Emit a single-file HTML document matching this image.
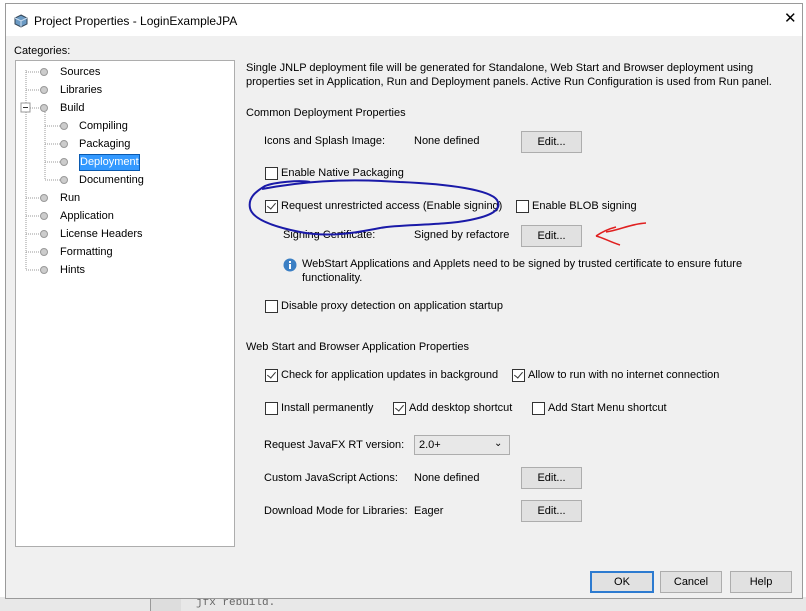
<!DOCTYPE html>
<html><head><style>
body{margin:0;width:806px;height:611px;overflow:hidden;background:#fff;font-family:"Liberation Sans",sans-serif;font-size:11px;line-height:16px;color:#000;position:relative}
.a{position:absolute;white-space:nowrap}
.dlg{position:absolute;left:5px;top:3px;width:796px;height:594px;background:#f0f0f0;border:1px solid #9a9a9a}
.title{position:absolute;left:0;top:0;width:796px;height:32px;background:#fff}
.btn{position:absolute;background:#e1e1e1;border:1px solid #adadad;text-align:center;line-height:20px;height:20px}
.cb{position:absolute;width:11px;height:11px;border:1px solid #333;background:#fff}
.ck::after{content:"";position:absolute;left:3px;top:0px;width:4px;height:7px;border:solid #333;border-width:0 1.5px 1.5px 0;transform:rotate(40deg)}
.tree{position:absolute;left:15px;top:60px;width:218px;height:485px;background:#fff;border:1px solid #adadad}
.dot{position:absolute;width:6px;height:6px;border-radius:50%;background:#ccc;border:1px solid #999}
</style></head><body>
<div class="a" style="left:0;top:597px;width:806px;height:14px;background:#e8e8e8"></div>
<div class="a" style="left:150px;top:597px;width:30px;height:14px;background:#ddd;border-left:1px solid #999"></div>
<div class="a" style="left:196px;top:595px;font-family:'Liberation Mono';font-size:11px;color:#666">jfx rebuild.</div>
<div class="dlg">
<div class="title"></div>
<svg class="a" style="left:8px;top:10px" width="14" height="14"><path d="M7 1L13 4V10L7 13L1 10V4Z" fill="#6b9ac4" stroke="#345" stroke-width="1"/><path d="M1 4L7 7L13 4M7 7V13" stroke="#cde" fill="none"/></svg>
<div class="a" style="left:28px;top:9px;font-size:12px">Project Properties - LoginExampleJPA</div>
<div class="a" style="left:778px;top:7px;font-size:15px">✕</div>
</div>
<div class="a" style="left:14px;top:43px">Categories:</div>
<div class="tree"></div>
<svg class="a" style="left:15px;top:60px" width="220" height="230">
<g stroke="#999" stroke-dasharray="1,1" fill="none">
<path d="M11 10V210M11 12H28M11 30H28M11 48H28M11 138H28M11 156H28M11 174H28M11 192H28M11 210H28"/>
<path d="M30 52V120M30 66H48M30 84H48M30 102H48M30 120H48"/>
</g>
<rect x="6" y="43" width="9" height="9" fill="#fff" stroke="#999"/><path d="M8 47.5H13" stroke="#333"/>
</svg>
<div class="a" style="left:79px;top:154px;width:59px;height:15px;background:#3399ff;border:1px solid #0a5ab0"></div>
<div class="dot" style="left:40px;top:68px"></div><div class="a" style="left:60px;top:64px">Sources</div>
<div class="dot" style="left:40px;top:86px"></div><div class="a" style="left:60px;top:82px">Libraries</div>
<div class="dot" style="left:40px;top:104px"></div><div class="a" style="left:60px;top:100px">Build</div>
<div class="dot" style="left:60px;top:122px"></div><div class="a" style="left:79px;top:118px">Compiling</div>
<div class="dot" style="left:60px;top:140px"></div><div class="a" style="left:79px;top:136px">Packaging</div>
<div class="dot" style="left:60px;top:158px"></div><div class="a" style="left:80px;top:154px;color:#fff">Deployment</div>
<div class="dot" style="left:60px;top:176px"></div><div class="a" style="left:79px;top:172px">Documenting</div>
<div class="dot" style="left:40px;top:194px"></div><div class="a" style="left:60px;top:190px">Run</div>
<div class="dot" style="left:40px;top:212px"></div><div class="a" style="left:60px;top:208px">Application</div>
<div class="dot" style="left:40px;top:230px"></div><div class="a" style="left:60px;top:226px">License Headers</div>
<div class="dot" style="left:40px;top:248px"></div><div class="a" style="left:60px;top:244px">Formatting</div>
<div class="dot" style="left:40px;top:266px"></div><div class="a" style="left:60px;top:262px">Hints</div>

<div class="a" style="left:246px;top:61px;line-height:14px">Single JNLP deployment file will be generated for Standalone, Web Start and Browser deployment using<br>properties set in Application, Run and Deployment panels. Active Run Configuration is used from Run panel.</div>
<div class="a" style="left:246px;top:105px">Common Deployment Properties</div>
<div class="a" style="left:264px;top:133px">Icons and Splash Image:</div>
<div class="a" style="left:414px;top:133px">None defined</div>
<div class="btn" style="left:521px;top:131px;width:59px">Edit...</div>
<div class="cb" style="left:265px;top:167px"></div><div class="a" style="left:281px;top:165px">Enable Native Packaging</div>
<div class="cb ck" style="left:265px;top:200px"></div><div class="a" style="left:281px;top:198px">Request unrestricted access (Enable signing)</div>
<div class="cb" style="left:516px;top:200px"></div><div class="a" style="left:532px;top:198px">Enable BLOB signing</div>
<div class="a" style="left:283px;top:227px">Signing Certificate:</div>
<div class="a" style="left:414px;top:227px">Signed by refactore</div>
<div class="btn" style="left:521px;top:225px;width:59px">Edit...</div>
<svg class="a" style="left:283px;top:258px" width="14" height="14"><circle cx="7" cy="7" r="6.5" fill="#3b7fc4"/><rect x="6" y="6" width="2" height="5" fill="#fff"/><rect x="6" y="3" width="2" height="2" fill="#fff"/></svg>
<div class="a" style="left:302px;top:257px;line-height:14px">WebStart Applications and Applets need to be signed by trusted certificate to ensure future<br>functionality.</div>
<div class="cb" style="left:265px;top:300px"></div><div class="a" style="left:281px;top:298px">Disable proxy detection on application startup</div>
<div class="a" style="left:246px;top:339px">Web Start and Browser Application Properties</div>
<div class="cb ck" style="left:265px;top:369px"></div><div class="a" style="left:281px;top:367px">Check for application updates in background</div>
<div class="cb ck" style="left:512px;top:369px"></div><div class="a" style="left:528px;top:367px">Allow to run with no internet connection</div>
<div class="cb" style="left:265px;top:402px"></div><div class="a" style="left:281px;top:400px">Install permanently</div>
<div class="cb ck" style="left:393px;top:402px"></div><div class="a" style="left:409px;top:400px">Add desktop shortcut</div>
<div class="cb" style="left:532px;top:402px"></div><div class="a" style="left:548px;top:400px">Add Start Menu shortcut</div>
<div class="a" style="left:264px;top:437px">Request JavaFX RT version:</div>
<div class="a" style="left:414px;top:435px;width:94px;height:18px;background:#e8e8e8;border:1px solid #adadad"></div>
<div class="a" style="left:419px;top:437px">2.0+</div>
<div class="a" style="left:494px;top:436px;font-size:10px">⌄</div>
<div class="a" style="left:264px;top:470px">Custom JavaScript Actions:</div>
<div class="a" style="left:414px;top:470px">None defined</div>
<div class="btn" style="left:521px;top:467px;width:59px">Edit...</div>
<div class="a" style="left:264px;top:503px">Download Mode for Libraries:</div>
<div class="a" style="left:414px;top:503px">Eager</div>
<div class="btn" style="left:521px;top:500px;width:59px">Edit...</div>
<div class="btn" style="left:590px;top:571px;width:60px;border:2px solid #2d7bd0;height:18px;line-height:18px">OK</div>
<div class="btn" style="left:660px;top:571px;width:60px">Cancel</div>
<div class="btn" style="left:730px;top:571px;width:60px">Help</div>
<svg class="a" style="left:0;top:0" width="806" height="611">
<path d="M262 189C300 182 340 178 400 182C450 184 490 190 497 200C503 210 490 216 470 220C440 226 400 224 380 228C360 232 330 238 300 232C270 226 252 218 250 208C248 198 255 192 265 186C275 182 300 180 310 182" fill="none" stroke="#1a1aa8" stroke-width="2"/>
<path d="M646 223C630 224 620 230 606 232M596 236C602 232 608 229 616 227M596 236C604 238 610 242 620 245" fill="none" stroke="#e02020" stroke-width="1.5"/>
</svg>
</body></html>
